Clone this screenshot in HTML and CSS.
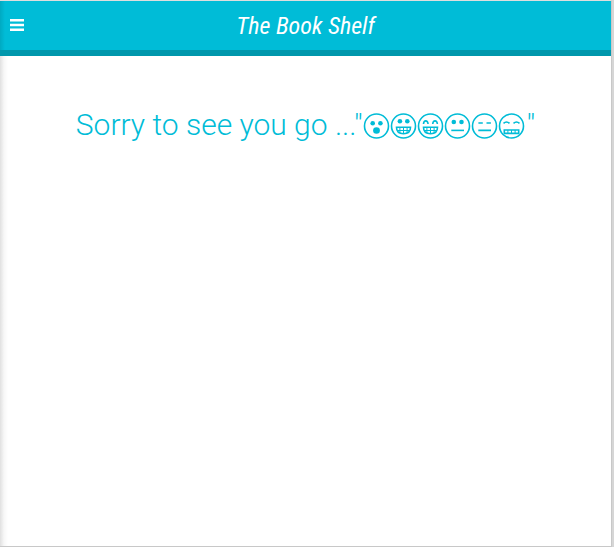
FILE: index.html
```html
<!DOCTYPE html>
<html lang="en">
<head>
<meta charset="utf-8">
<meta name="viewport" content="width=device-width, initial-scale=1">
<title>The Book Shelf</title>
<link rel="stylesheet" href="styles.css">
</head>
<body>
<div class="page">
  <header class="bar">
    <button class="menu" type="button" aria-label="Menu">
      <svg width="14" height="12" viewBox="0 0 14 12" fill="currentColor"><path d="M0 0h14v2.5H0zM0 4.7h14v2.5H0zM0 9.4h14v2.5H0z"/></svg>
    </button>
    <span class="brand">The Book Shelf</span>
  </header>
  <main class="content">
    <h1 class="message"><span>Sorry to see you go ..."</span><span class="faces">
      <svg class="face" viewBox="0 0 26 26" role="img" aria-label="Surprised face"><circle cx="13" cy="13" r="12"/><g class="solid"><circle cx="9.2" cy="10.2" r="2.3"/><circle cx="16.9" cy="10.2" r="2.3"/><ellipse cx="13" cy="17.5" rx="3.4" ry="3.2"/></g></svg>
      <svg class="face" viewBox="0 0 26 26" role="img" aria-label="Grinning face"><circle cx="13" cy="13" r="12"/><g class="solid"><circle cx="9.4" cy="8.3" r="2.3"/><circle cx="16.8" cy="8.3" r="2.3"/></g><path d="M6 14.2h14c0 4.3-2.8 6.5-7 6.5s-7-2.2-7-6.5z"/><path class="thin" d="M6.6 17.5h12.8M9.4 14v6M13 14v6.7M16.6 14v6"/></svg>
      <svg class="face" viewBox="0 0 26 26" role="img" aria-label="Beaming face"><circle cx="13" cy="13" r="12"/><path d="M6 11c.3-4.2 4.1-4.2 4.6 0M15.2 11c.4-4.2 4.2-4.2 4.7 0M6 14.2h14c0 4.3-2.8 6.5-7 6.5s-7-2.2-7-6.5z"/><path class="thin" d="M6.6 17.5h12.8M9.4 14v6M13 14v6.7M16.6 14v6"/></svg>
      <svg class="face" viewBox="0 0 26 26" role="img" aria-label="Neutral face"><circle cx="13" cy="13" r="12"/><g class="solid"><circle cx="9.3" cy="9" r="2.3"/><circle cx="17" cy="9" r="2.3"/></g><path d="M6.8 17.4h12.7"/></svg>
      <svg class="face" viewBox="0 0 26 26" role="img" aria-label="Expressionless face"><circle cx="13" cy="13" r="12"/><path d="M6.9 10h4.4M15 10h4.4M6.8 17.4h12.7"/></svg>
      <svg class="face" viewBox="0 0 26 26" role="img" aria-label="Grimacing face"><circle cx="13" cy="13" r="12"/><path d="M5 10.3c1.7-1.5 4.3-1.5 6 0M15 10.3c1.7-1.5 4.3-1.5 6 0M5.8 17h14.4v3.4H5.8z"/><path class="thin" d="M9.4 17v3.6M13 17v3.6M16.6 17v3.6"/></svg>
    </span><span>"</span></h1>
  </main>
</div>
</body>
</html>
```
FILE: styles.css
```css
* { box-sizing: border-box; }
body {
  margin: 0;
  background: #d6d6d6;
  font-family: Roboto, "Liberation Sans", sans-serif;
}
.page {
  display: flex;
  flex-direction: column;
  min-height: 100vh;
  margin-right: 2px;
  border: solid #c8c8c8;
  border-width: 1px 1px 1px 0;
  border-top-color: #dedede;
  background: linear-gradient(to right, rgba(0, 0, 0, .12), rgba(0, 0, 0, .03) 4px, transparent 8px) #fff;
}
.bar {
  display: grid;
  grid-template-columns: 34px 1fr 34px;
  align-items: center;
  height: 55px;
  border-bottom: 6px solid #0097ac;
  background: linear-gradient(to right, rgba(0, 0, 0, .1), transparent 5px) #00bcd7;
  color: #fff;
}
.menu {
  display: flex;
  padding: 8px 10px 10px;
  border: 0;
  background: none;
  color: inherit;
  cursor: pointer;
}
.brand {
  text-align: center;
  font: italic 24px/32px "Roboto Condensed", "Liberation Sans", sans-serif;
}
.content { padding: 49px 16px; }
.message {
  display: flex;
  flex-wrap: wrap;
  justify-content: center;
  margin: 0;
  color: #00bcd7;
  font-size: 30px;
  font-weight: 300;
  line-height: 40px;
}
.faces {
  display: flex;
  align-items: center;
  padding: 2px 2px 0 0;
}
.face {
  width: 27px;
  height: 26px;
  fill: none;
  stroke: currentColor;
  stroke-width: 1.6;
}
.solid { fill: currentColor; stroke: none; }
.thin { stroke-width: 1; }
```
